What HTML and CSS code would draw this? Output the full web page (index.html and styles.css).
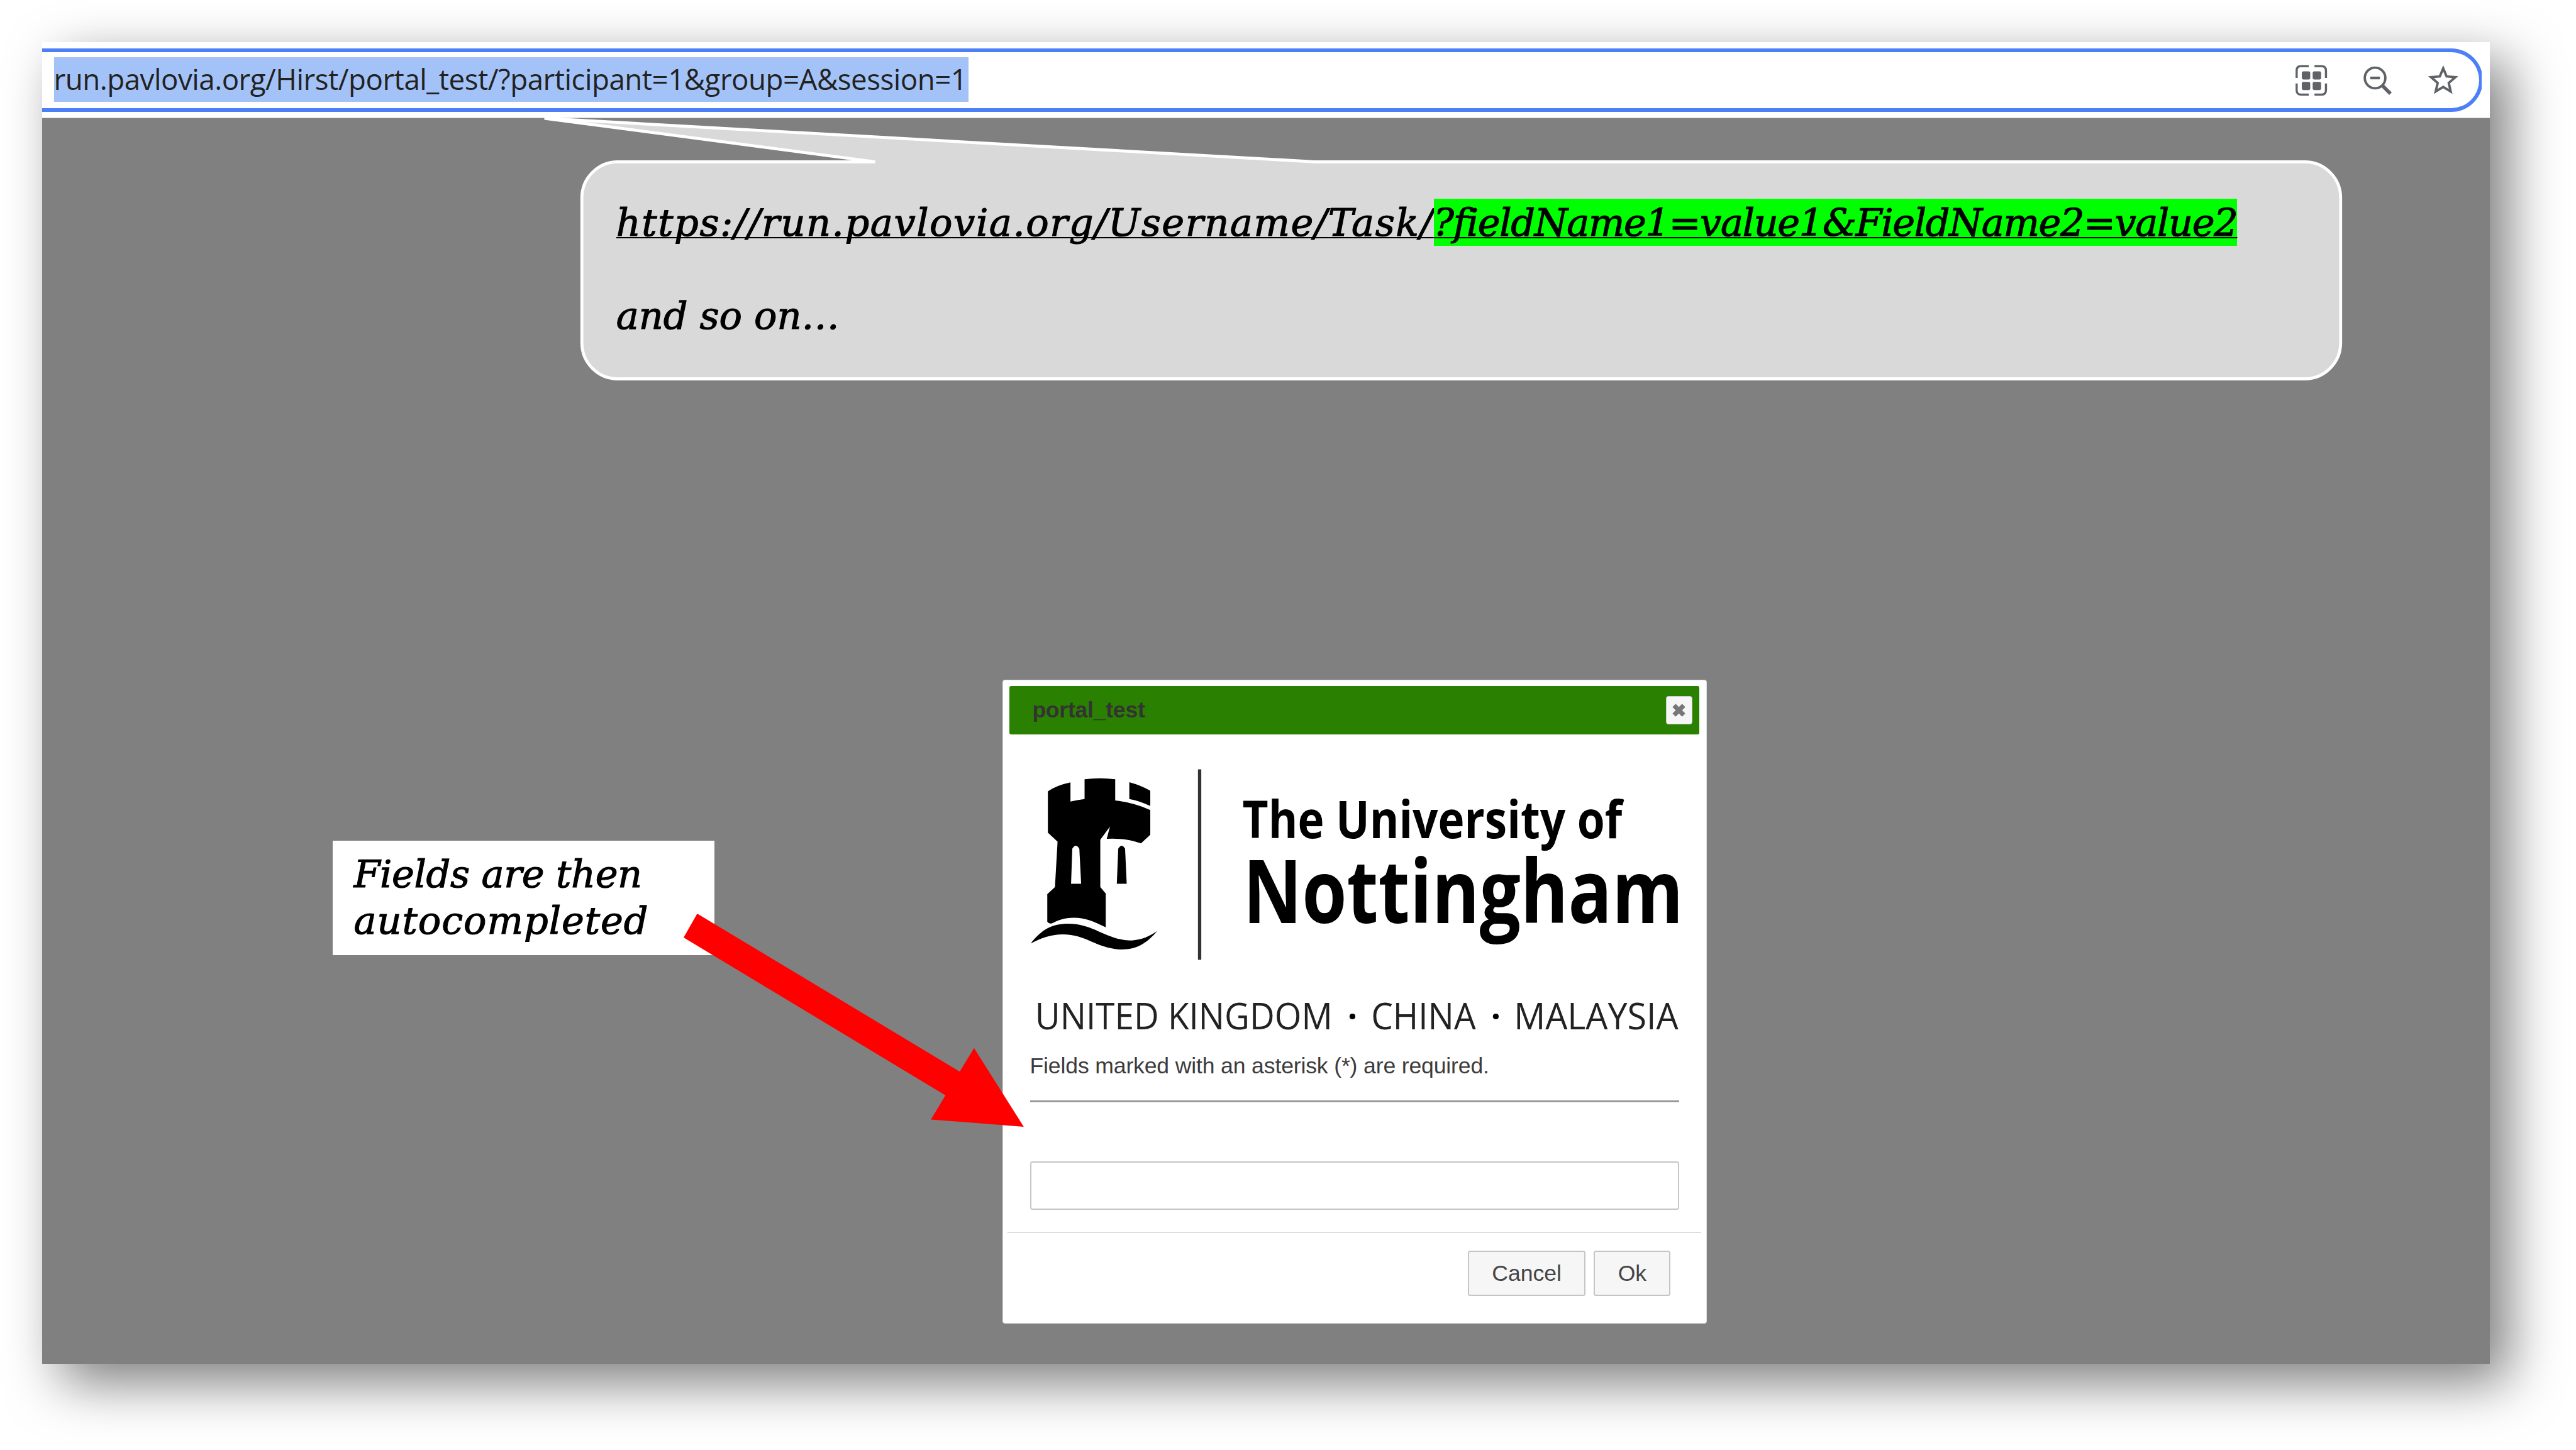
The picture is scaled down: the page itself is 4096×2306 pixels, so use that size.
FILE: index.html
```html
<!DOCTYPE html>
<html lang="en">
<head>
<meta charset="utf-8">
<title>portal_test</title>
<link rel="stylesheet" href="styles.css">
</head>
<body>
<main class="frame">
  <header class="toolbar">
    <div class="toolbar-clip">
      <div class="address">
        <span class="url">run.pavlovia.org/Hirst/portal_test/?participant=1&amp;group=A&amp;session=1</span>
        <div class="actions">
          <svg class="icon" viewBox="0 0 60 60">
            <g fill="none" stroke="#5f6368" stroke-width="3.6"><path d="M5 26V14Q5 6.500 12 6.500H25M34.500 6.500H46Q53.500 6.500 53.500 14V26M53.500 35V46Q53.500 53.500 46 53.500H34.500M25 53.500H12Q5 53.500 5 46V35"/></g>
            <g fill="#5f6368"><rect x="13.500" y="15" width="14" height="13.500" rx="2.500"/><rect x="31.500" y="15" width="14" height="13.500" rx="2.500"/><rect x="13.500" y="32.500" width="14" height="13.500" rx="2.500"/><rect x="31.500" y="32.500" width="14" height="13.500" rx="2.500"/></g>
          </svg>
          <svg class="icon" viewBox="0 0 60 60"><g fill="none" stroke="#5f6368"><circle cx="25.500" cy="26" r="17" stroke-width="4"/><path d="M17.500 26H33.500" stroke-width="4.500"/><path d="M37.500 38.500L51 52" stroke-width="6"/></g></svg>
          <svg class="icon" viewBox="0 0 24 24"><path fill="#5f6368" d="M22 9.240l-7.190-.62L12 2 9.190 8.630 2 9.240l5.460 4.730L5.820 21 12 17.270 18.180 21l-1.630-7.030L22 9.240zM12 15.400l-3.760 2.270 1-4.280-3.320-2.880 4.380-.38L12 6.100l1.710 4.040 4.380.38-3.320 2.880 1 4.280L12 15.400z"/></svg>
        </div>
      </div>
    </div>
  </header>

  <section class="dialog">
    <div class="titlebar"><span class="title">portal_test</span>
      <button class="close"><svg viewBox="0 0 24 22"><path d="M4 3L20 19M20 3L4 19" stroke="#777" stroke-width="7.500"/></svg></button>
    </div>
    <div class="content">
      <svg class="logo" viewBox="1704 1260 1072 455">
        <g transform="translate(1680 1250) scale(.33333)">
          <path fill-rule="evenodd" d="M160 175Q205 145 272 131V226Q305 217 342 213V115Q417 105 494 115V220Q590 232 668 268V390L622 433Q540 405 452 411L468 350L420 415V650L447 682V850C390 820 340 802 290 802C240 802 210 815 180 830Q165 834 157 822V685L195 650L208 425L160 380ZM275 634L281 460Q298 430 316 460L325 634Z"/>
          <path d="M564 130Q620 145 668 172V248Q615 222 564 213Z"/>
          <path d="M502 634L509 460Q526 430 543 460L551 634Z"/>
          <path d="M75 930C130 860 180 832 262 832C390 832 450 915 575 915C625 912 665 895 703 868C650 930 600 960 525 960C400 955 350 885 235 885C170 885 125 905 75 930Z"/>
        </g>
        <rect x="1981.500" y="1272" width="5.500" height="315" fill="#333"/>
        <text class="logo-top" x="2055" y="1385.500" textLength="628" lengthAdjust="spacingAndGlyphs">The University of</text>
        <text class="logo-name" x="2056" y="1526" textLength="728" lengthAdjust="spacingAndGlyphs">Nottingham</text>
        <text class="logo-sub" x="1712" y="1702" textLength="492" lengthAdjust="spacingAndGlyphs">UNITED KINGDOM</text>
        <text class="logo-dot" x="2237" y="1701">·</text>
        <text class="logo-sub" x="2268" y="1702" textLength="173" lengthAdjust="spacingAndGlyphs">CHINA</text>
        <text class="logo-dot" x="2474" y="1701">·</text>
        <text class="logo-sub" x="2504" y="1702" textLength="272" lengthAdjust="spacingAndGlyphs">MALAYSIA</text>
      </svg>
      <p class="note">Fields marked with an asterisk (*) are required.</p>
      <hr class="rule">
      <input class="field" type="text">
    </div>
    <footer class="buttons">
      <button class="btn">Cancel</button>
      <button class="btn ok">Ok</button>
    </footer>
  </section>
</main>

<aside class="callout">
  <svg class="callout-shape" viewBox="890 185 2990 450">
    <path d="M1021.500 267.500H1447L900 195.500L2174 267.500H3811A59.500 59.500 0 0 1 3870.500 327V567A59.500 59.500 0 0 1 3811 626.500H1021.500A59.500 59.500 0 0 1 962 567V327A59.500 59.500 0 0 1 1021.500 267.500Z" fill="#d9d9d9" stroke="#fff" stroke-width="5" stroke-linejoin="bevel"/>
  </svg>
  <p class="link"><span class="base">https://run.pavlovia.org/Username/Task/</span><span class="query">?fieldName1=value1&amp;FieldName2=value2</span></p>
  <p class="more">and so on…</p>
</aside>

<aside class="label"><span class="line-one">Fields are then</span><br><span class="line-two">autocompleted</span></aside>

<svg class="arrow" viewBox="1131 1511 563 353"><path fill="#f00" d="M1153.500 1511L1131 1550.500L1564 1811.500L1540 1851.500L1693.500 1863.500L1611.300 1733.300L1587.600 1772.200Z"/></svg>
</body>
</html>
```
FILE: styles.css
```css
/* 1rem is one hundred design units */
html { font-size: 96.15px; }
body { margin: 0; width: 4096px; height: 2306px; position: relative; overflow: hidden; background: #fff; }
* { box-sizing: border-box; }
p { margin: 0; }

.frame { position: absolute; left: .7rem; top: .7rem; width: 40.48rem; height: 21.86rem; background: #808080; box-shadow: .31rem .31rem .84rem rgba(0, 0, 0, .52); }
.toolbar { height: 1.255rem; padding: .105rem .14rem 0 0; background: #fff; border-bottom: .02rem solid #c8c8c8; }
.toolbar-clip { height: 1.05rem; overflow: hidden; }
.address { display: flex; align-items: center; justify-content: space-between; height: 1.045rem; margin-right: -.02rem; padding: 0 .29rem 0 .19rem; border: .065rem solid #4d80f7; border-left: 0; border-radius: 0 .53rem .53rem 0; }
.url { height: .745rem; width: 15.13rem; margin-top: -.02rem; line-height: .725rem; background: #a3c2f7; color: #222; font-family: "Open Sans", sans-serif; font-size: .475rem; letter-spacing: -.0051rem; white-space: nowrap; }
.actions { display: flex; gap: .49rem; }
.icon { width: .6rem; height: .6rem; }

.dialog { position: absolute; left: 15.876rem; top: 10.54rem; width: 11.648rem; height: 10.65rem; padding: .1rem; background: #fff; border: .02rem solid #ddd; border-radius: .04rem; font-family: "Liberation Sans", sans-serif; color: #333; }
.titlebar { display: flex; align-items: center; justify-content: space-between; height: .797rem; margin: 0 .01rem; padding: 0 .12rem 0 .375rem; background: #2a8000; border-radius: .03rem; }
.title { font-size: .37rem; font-weight: bold; letter-spacing: -.0025rem; }
.close { display: flex; align-items: center; justify-content: center; width: .435rem; height: .47rem; padding: 0; background: #f6f6f6; border: .02rem solid #ccc; border-radius: .04rem; }
.close svg { width: .24rem; height: .22rem; }
.content { display: flex; flex-direction: column; padding: .46rem .345rem 0; }
.logo { width: 10.72rem; height: 4.55rem; overflow: visible; }
.logo-top, .logo-name, .logo-dot { font-family: "Open Sans", sans-serif; font-weight: 700; fill: #000; }
.logo-top { font-size: 85px; }
.logo-name { font-size: 145px; }
.logo-sub { font-family: "Open Sans", sans-serif; font-size: 61px; fill: #222; }
.logo-dot { font-size: 56px; text-anchor: middle; }
.note { margin-top: .22rem; font-size: .37rem; letter-spacing: -.0015rem; line-height: .5rem; color: #3c3c3c; white-space: nowrap; }
.rule { width: 100%; height: .038rem; margin: .32rem 0 0; border: 0; background: #999; }
.field { width: 100%; height: .8rem; margin: .975rem 0 0; background: #fff; border: .03rem solid #c5c5c5; border-radius: .04rem; }
.buttons { display: flex; justify-content: flex-end; gap: .14rem; margin: .36rem -.02rem 0; padding: .3rem .505rem 0 0; border-top: .03rem solid #ddd; }
.btn { width: 1.94rem; height: .75rem; padding: 0; background: #f6f6f6; border: .025rem solid #c5c5c5; border-radius: .04rem; color: #454545; font-family: inherit; font-size: .37rem; }
.ok { width: 1.27rem; }

.callout { position: absolute; left: 8.9rem; top: 1.85rem; width: 29.9rem; height: 4.5rem; padding: 1.43rem 0 0 1.29rem; }
.callout-shape { position: absolute; left: 0; top: 0; width: 100%; height: 100%; }
.link, .more, .label { font-family: "DejaVu Serif", serif; font-style: italic; font-size: .63rem; color: #000; -webkit-text-stroke: .012rem #000; white-space: nowrap; }
.link, .more { position: relative; line-height: .82rem; }
.link { text-decoration: underline; text-decoration-thickness: .022rem; text-underline-offset: .02rem; text-decoration-skip-ink: none; }
.base { letter-spacing: .0162rem; }
.query { padding: .035rem 0 .02rem; background: #0f0; letter-spacing: -.0142rem; }
.more { margin-top: .72rem; letter-spacing: -.001rem; }
.label { position: absolute; left: 5.5rem; top: 13.91rem; width: 6.31rem; height: 1.89rem; padding: .16rem 0 0 .35rem; background: #fff; line-height: .77rem; }
.line-one { letter-spacing: -.004rem; }
.line-two { letter-spacing: .01rem; }
.arrow { position: absolute; left: 11.31rem; top: 15.11rem; width: 5.63rem; height: 3.53rem; }
```
